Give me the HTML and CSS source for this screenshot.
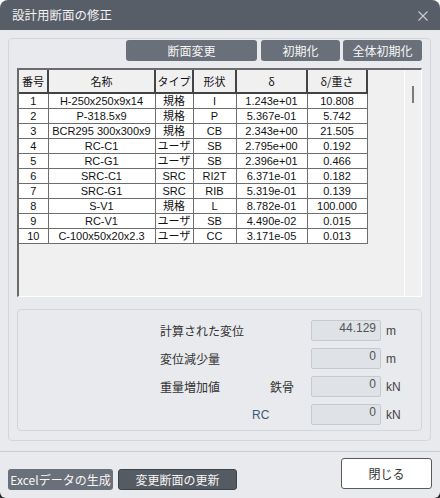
FILE: index.html
```html
<!DOCTYPE html>
<html lang="ja">
<head>
  <meta charset="UTF-8">
  <title>設計用断面の修正</title>
  <link rel="stylesheet" href="styles.css">
</head>
<body>
  <div class="window">
    <div class="titlebar">
      <span class="title">設計用断面の修正</span>
      <svg class="close-x" width="10" height="10" viewBox="0 0 10 10">
        <path d="M0.5 0.5L9.5 9.5M9.5 0.5L0.5 9.5" stroke="#c9cdd3" stroke-width="1.1" fill="none"/>
      </svg>
    </div>

    <div class="content">
      <div class="panel">
        <div class="toolbar">
          <button class="btn btn-wide">断面変更</button>
          <button class="btn btn-small">初期化</button>
          <button class="btn btn-small">全体初期化</button>
        </div>

        <div class="grid-box">
          <div class="grid-area">
            <table class="sections">
              <colgroup>
                <col style="width:29px"><col style="width:107px"><col style="width:38px">
                <col style="width:43px"><col style="width:71px"><col style="width:60px">
              </colgroup>
              <thead>
                <tr><th>番号</th><th>名称</th><th>タイプ</th><th>形状</th><th>δ</th><th>δ/重さ</th></tr>
              </thead>
              <tbody id="rows"></tbody>
            </table>
          </div>
          <div class="scroll-track"><div class="scroll-thumb"></div></div>
        </div>

        <div class="results">
          <span class="label">計算された変位</span>
          <span class="box">44.129</span>
          <span class="unit">m</span>

          <span class="label">変位減少量</span>
          <span class="box">0</span>
          <span class="unit">m</span>

          <span class="label">重量増加値</span>
          <span class="sub sub-steel">鉄骨</span>
          <span class="box">0</span>
          <span class="unit">kN</span>

          <span class="sub sub-rc">RC</span>
          <span class="box">0</span>
          <span class="unit">kN</span>
        </div>
      </div>
    </div>

    <div class="footer">
      <button class="btn btn-excel">Excelデータの生成</button>
      <button class="btn btn-update">変更断面の更新</button>
      <button class="btn-close">閉じる</button>
    </div>
  </div>

  <script>
    const sections = [
      ["1", "H-250x250x9x14", "規格", "I", "1.243e+01", "10.808"],
      ["2", "P-318.5x9", "規格", "P", "5.367e-01", "5.742"],
      ["3", "BCR295 300x300x9", "規格", "CB", "2.343e+00", "21.505"],
      ["4", "RC-C1", "ユーザ", "SB", "2.795e+00", "0.192"],
      ["5", "RC-G1", "ユーザ", "SB", "2.396e+01", "0.466"],
      ["6", "SRC-C1", "SRC", "RI2T", "6.371e-01", "0.182"],
      ["7", "SRC-G1", "SRC", "RIB", "5.319e-01", "0.139"],
      ["8", "S-V1", "規格", "L", "8.782e-01", "100.000"],
      ["9", "RC-V1", "ユーザ", "SB", "4.490e-02", "0.015"],
      ["10", "C-100x50x20x2.3", "ユーザ", "CC", "3.171e-05", "0.013"]
    ];

    const tbody = document.getElementById("rows");
    sections.forEach(s => {
      const tr = document.createElement("tr");
      s.forEach(v => {
        const td = document.createElement("td");
        td.textContent = v;
        tr.appendChild(td);
      });
      tbody.appendChild(tr);
    });
  </script>
</body>
</html>
```

FILE: styles.css
```css
html {
  background: linear-gradient(#ffffff 50%, #2a2a2a 50%);
}

body {
  margin: 0;
  font-family: "Noto Sans CJK JP", "Liberation Sans", sans-serif;
  color: #333;
}

.window {
  width: 440px;
  height: 498px;
  background: #e8eaed;
  border-radius: 8px 8px 6px 6px;
  overflow: hidden;
  display: flex;
  flex-direction: column;
}

/* タイトルバー */
.titlebar {
  height: 30px;
  flex: none;
  background: #585e67;
  display: flex;
  align-items: center;
  justify-content: space-between;
  padding: 0 12px 0 12px;
}

.title {
  color: #f2f2f2;
  font-size: 12.5px;
  line-height: 1;
}

.close-x {
  margin-top: 2px;
}

.content {
  padding: 8px 9px 0 8px;
}

.panel {
  height: 400px;
  border: 1px solid #d3d6da;
  border-radius: 4px;
  padding: 1px 8px 0 8px;
}

.toolbar {
  display: flex;
  justify-content: flex-end;
  gap: 3px;
  height: 21px;
}

.btn {
  height: 21px;
  border: none;
  border-radius: 3px;
  background: #6a7079;
  color: #f7f7f7;
  font-family: "Noto Sans CJK JP", sans-serif;
  font-size: 12px;
  padding: 0;
  line-height: 21px;
}

.btn-wide {
  width: 131px;
  margin-right: 1px;
}

.btn-small {
  width: 79px;
}

/* 断面一覧 */
.grid-box {
  margin-top: 7px;
  height: 226px;
  display: flex;
  background: #f0f0f0;
  border-top: 2px solid #6b6b6b;
  border-left: 2px solid #6b6b6b;
  border-right: 1px solid #ffffff;
  border-bottom: 1px solid #ffffff;
}

.grid-area {
  flex: 1;
}

.scroll-track {
  width: 16px;
  border-left: 1px solid #ffffff;
  position: relative;
}

.scroll-thumb {
  position: absolute;
  left: 7px;
  top: 16px;
  width: 2px;
  height: 17px;
  background: #7b7b7b;
}

table.sections {
  border-collapse: collapse;
  table-layout: fixed;
  width: 348px;
  font-family: "Liberation Sans", "Noto Sans CJK JP", sans-serif;
  font-size: 11px;
  color: #111;
}

table.sections th {
  height: 22px;
  background: #f0f0f0;
  font-weight: normal;
  font-family: "Noto Sans CJK JP", sans-serif;
  font-size: 11px;
  border-right: 2px solid #444;
  border-bottom: 2px solid #444;
  padding: 0;
}

table.sections td {
  height: 14px;
  background: #ffffff;
  border: 1px solid #6d6d6d;
  text-align: center;
  padding: 0;
  line-height: 13px;
  white-space: nowrap;
  overflow: hidden;
}

table.sections td:first-child {
  border-left: none;
}

/* 計算結果 */
.results {
  margin-top: 12px;
  height: 110px;
  border: 1px solid #d3d6da;
  border-radius: 4px;
  padding: 10px 0 0 142px;
  display: grid;
  grid-template-columns: 92px 59px 70px auto;
  grid-auto-rows: 21px;
  row-gap: 7px;
  align-items: center;
  font-size: 12px;
}

.label {
  grid-column: 1;
  color: #333;
}

.sub {
  grid-column: 2;
}

.sub-steel {
  justify-self: end;
  margin-right: 17px;
}

.sub-rc {
  justify-self: start;
  color: #3d5a78;
  font-family: "Liberation Sans", sans-serif;
}

.box {
  grid-column: 3;
  height: 19px;
  background: #dfe2e6;
  border: 1px solid #c6c9ce;
  border-radius: 2px;
  color: #555;
  text-align: right;
  padding-right: 4px;
  line-height: 15px;
  font-family: "Liberation Sans", sans-serif;
}

.unit {
  grid-column: 4;
  margin-left: 5px;
  color: #444;
  font-family: "Liberation Sans", sans-serif;
}

/* 下部ボタン */
.footer {
  margin-top: 10px;
  flex: 1;
  border-top: 1px solid #c8cbd0;
  display: flex;
  align-items: flex-end;
  gap: 5px;
  padding: 0 8px 8px 8px;
}

.btn-excel {
  width: 105px;
}

.btn-update {
  width: 119px;
  background: #555b63;
  border: 1px solid #3e434a;
  line-height: 19px;
}

.btn-close {
  margin-left: auto;
  margin-bottom: 1px;
  width: 91px;
  height: 31px;
  background: #ffffff;
  border: 1px solid #5a5a5a;
  border-radius: 3px;
  font-family: "Noto Sans CJK JP", sans-serif;
  font-size: 12px;
  color: #333;
}
```
